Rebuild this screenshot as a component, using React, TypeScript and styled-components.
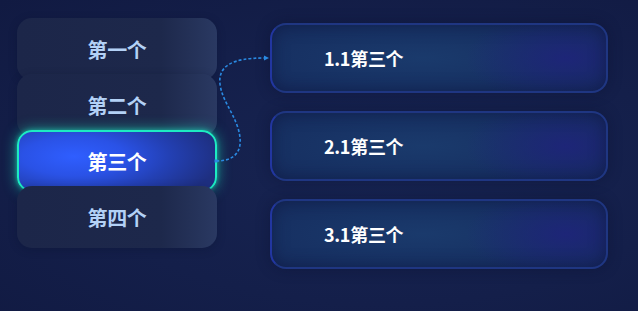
import React, { useState } from 'react';
import styled, { createGlobalStyle } from 'styled-components';

const GlobalStyle = createGlobalStyle`
  html, body {
    margin: 0;
    padding: 0;
    background: #131e47;
  }
  body {
    font-family: "Noto Sans CJK SC", "Noto Sans", sans-serif;
  }
`;

const Stage = styled.div`
  position: relative;
  width: 638px;
  height: 311px;
  overflow: hidden;
  box-sizing: border-box;
  padding: 18px 0 0 17px;
  display: flex;
  gap: 53px;
  background: radial-gradient(ellipse at 60% 55%, #172452 0%, #141f4a 55%, #111a42 100%);
`;

const Menu = styled.div`
  width: 200px;
  display: flex;
  flex-direction: column;
`;

const MenuItem = styled.div<{ active: boolean }>`
  position: relative;
  height: 62px;
  box-sizing: border-box;
  margin-top: -6px;
  &:first-child {
    margin-top: 0;
  }
  display: flex;
  align-items: center;
  justify-content: center;
  border-radius: 15px;
  font-size: 20px;
  font-weight: 700;
  letter-spacing: -0.3px;
  cursor: pointer;
  color: ${({ active }) => (active ? '#ffffff' : '#b3d1f6')};
  border: ${({ active }) => (active ? '2px solid #1debc2' : 'none')};
  background: ${({ active }) =>
    active
      ? 'radial-gradient(ellipse 75% 95% at 28% 42%, #2f5eff 0%, #2a52e6 35%, #2340b4 65%, #1e2f80 100%)'
      : 'linear-gradient(90deg, #1c2649 0%, #1d284b 72%, #2a3962 100%)'};
  box-shadow: ${({ active }) =>
    active
      ? '0 0 14px rgba(29, 235, 194, 0.6), 0 0 4px rgba(29, 235, 194, 0.5)'
      : '0 2px 8px rgba(8, 14, 40, 0.25)'};
`;

const Details = styled.div`
  width: 338px;
  padding-top: 5px;
  display: flex;
  flex-direction: column;
  gap: 18px;
`;

const DetailCard = styled.div`
  height: 70px;
  box-sizing: border-box;
  border: 2px solid #1f3682;
  border-left-color: #2236a0;
  border-radius: 16px;
  padding-left: 52px;
  display: flex;
  align-items: center;
  color: #ffffff;
  font-size: 18px;
  font-weight: 700;
  letter-spacing: -0.3px;
  background:
    radial-gradient(ellipse 30% 70% at 88% 50%, rgba(30, 36, 122, 0.9) 0%, rgba(30, 36, 122, 0) 100%),
    radial-gradient(ellipse 70% 80% at 45% 50%, #1a3a6c 0%, #173163 60%, #152a5b 100%);
  box-shadow: inset 0 0 16px rgba(12, 20, 60, 0.55), 0 0 14px rgba(10, 16, 44, 0.4);
`;

const Connector = styled.svg`
  position: absolute;
  left: 0;
  top: 0;
  width: 638px;
  height: 311px;
  pointer-events: none;
  z-index: 5;
`;

const items = ['第一个', '第二个', '第三个', '第四个'];
const details = ['1.1第三个', '2.1第三个', '3.1第三个'];

export default function App() {
  const [active, setActive] = useState(2);

  return (
    <>
      <GlobalStyle />
      <Stage>
        <Menu>
          {items.map((label, i) => (
            <MenuItem key={label} active={i === active} onClick={() => setActive(i)}>
              {label}
            </MenuItem>
          ))}
        </Menu>
        <Details>
          {details.map((d) => (
            <DetailCard key={d}>{d}</DetailCard>
          ))}
        </Details>
        <Connector viewBox="0 0 638 311">
          <path
            d="M216,161 C238,161 244,148 238,128 C232,110 222,100 220,84 C218,66 232,58 264,58"
            fill="none"
            stroke="#2a8ae2"
            strokeWidth="1.6"
            strokeDasharray="3 2"
          />
          <path d="M264,55.5 L269,58 L264,60.5 Z" fill="#2a8ae2" />
          <rect x="214.5" y="159.5" width="3" height="3" fill="#2a8ae2" />
        </Connector>
      </Stage>
    </>
  );
}
